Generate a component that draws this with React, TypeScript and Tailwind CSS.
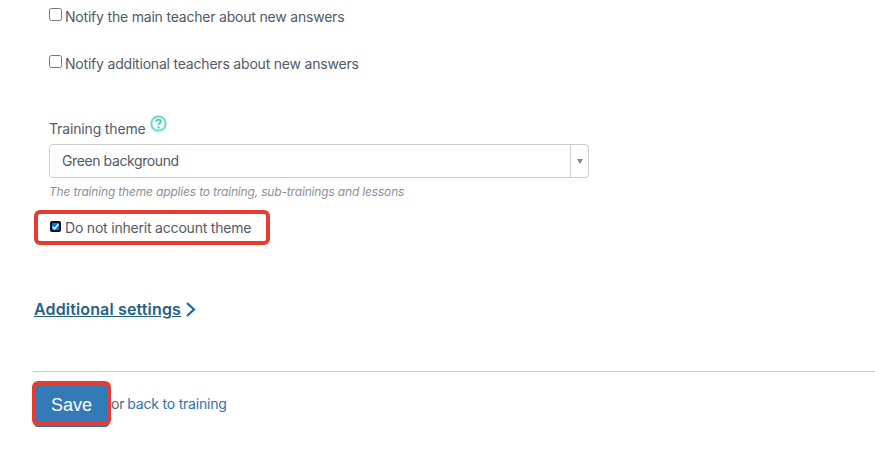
function CheckRow({ label, checked }: { label: string; checked?: boolean }) {
  return (
    <label className="flex items-center h-[20px] text-[14px] tracking-[-0.2px] text-[#525a66]">
      {checked ? (
        <span className="w-[11px] h-[11px] ml-[1px] mr-[4px] mb-[3px] rounded-[2px] border-2 border-[#101010] bg-[#0075ff] flex items-center justify-center">
          <svg width="7" height="7" viewBox="0 0 7 7" fill="none">
            <path d="M0.500 3.700L2.600 5.800 6.500 1" stroke="#fff" strokeWidth="1.600" />
          </svg>
        </span>
      ) : (
        <input type="checkbox" className="w-[13px] h-[13px] m-0 mr-[3px] mb-[3px]" />
      )}
      <span>{label}</span>
    </label>
  );
}

export default function App() {
  return (
    <div className="w-[875px] h-[456px] overflow-hidden bg-white font-['Inter',sans-serif] text-[#525a66]">
      <div className="pl-[49px] pt-[6px]">
        <CheckRow label="Notify the main teacher about new answers" />
        <div className="mt-[27px]">
          <CheckRow label="Notify additional teachers about new answers" />
        </div>

        <div className="mt-[45px] flex items-start h-[20px]">
          <span className="text-[14px] leading-[20px] mt-[1px] tracking-[-0.15px]">Training theme</span>
          <svg className="ml-[4px] mt-[-3px] drop-shadow-[0_1px_1px_rgba(0,0,0,0.15)]" width="17" height="17" viewBox="0 0 17 17" fill="none">
            <circle cx="8.500" cy="8.500" r="7.200" stroke="#5fdccb" strokeWidth="1.700" />
            <path d="M6.300 6.700c0-1.300 1-2.100 2.300-2.100s2.200.8 2.200 2c0 1.700-2.200 1.500-2.200 3.200" stroke="#3fd0bd" strokeWidth="1.800" />
            <circle cx="8.600" cy="12.400" r="1.100" fill="#3fd0bd" />
          </svg>
        </div>

        <div className="mt-[6px] w-[540px] h-[34px] flex border border-[#cccccc] rounded-[4px]">
          <div className="flex-1 pl-[12px] text-[14px] leading-[32px] tracking-[-0.4px] text-[#525a66]">Green background</div>
          <div className="w-[18px] border-l border-[#cccccc] flex items-center justify-center">
            <div className="w-0 h-0 border-x-[3px] border-x-transparent border-t-[5px] border-t-[#888888]" />
          </div>
        </div>
        <p className="mt-[6px] text-[12px] leading-[16px] italic tracking-[-0.17px] text-[#8a8f98]">
          The training theme applies to training, sub-trainings and lessons
        </p>
      </div>

      <div className="ml-[34px] mt-[10px] w-[236px] h-[35px] border-[4px] border-[#e53b30] rounded-[6px] pl-[11px] flex items-center">
        <CheckRow label="Do not inherit account theme" checked />
      </div>

      <div className="ml-[34px] mt-[52px] flex items-center h-[24px] text-[16px] font-semibold tracking-[0.15px] text-[#1f6287]">
        <a className="underline">Additional settings</a>
        <svg className="ml-[4px]" width="11" height="17" viewBox="0 0 11 17" fill="none">
          <path d="M2 2l7 6.500-7 6.500" stroke="#0f6ba8" strokeWidth="2.200" />
        </svg>
      </div>

      <div className="ml-[33px] mt-[50px] border-t border-[#cccccc]" />

      <div className="ml-[32px] mt-[9px] flex items-center">
        <button className="w-[79px] h-[45px] pt-[3px] border-[4px] border-[#e53b30] rounded-[6px] bg-[#337ab7] shadow-[0_3px_0_-2px_#2e6da4] text-white text-[18px] font-['Liberation_Sans',sans-serif]">
          Save
        </button>
        <span className="text-[14px] tracking-[-0.2px] text-[#5a6270]">or</span>
        <a className="ml-[3px] text-[14px] tracking-[-0.2px] text-[#2f6fb5]">back to training</a>
      </div>
    </div>
  );
}
